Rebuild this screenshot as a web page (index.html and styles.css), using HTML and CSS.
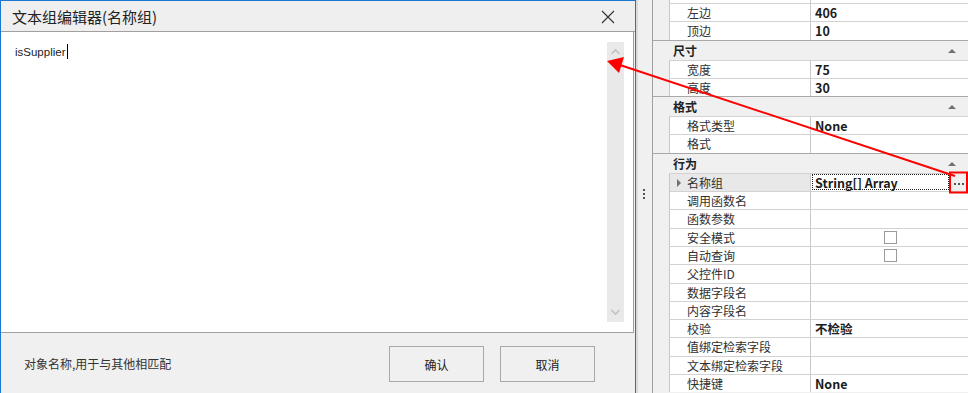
FILE: index.html
```html
<!DOCTYPE html>
<html lang="zh">
<head>
    <meta charset="UTF-8">
    <title>文本组编辑器(名称组)</title>
    <link rel="stylesheet" href="styles.css">
</head>
<body>
    <div class="dialog">
        <div class="titlebar">
            <span class="title">文本组编辑器(名称组)</span>
            <svg class="close" width="14" height="14" viewBox="0 0 14 14"><path d="M1 1L13 13M13 1L1 13" stroke="#333" stroke-width="1.1" fill="none"/></svg>
        </div>
        <div class="editor">
            <div class="text">isSupplier<span class="caret"></span></div>
            <div class="vscroll">
                <svg width="17" height="14" viewBox="0 0 17 14"><path d="M4.5 9L8.5 5L12.5 9" stroke="#c2c2c2" stroke-width="1.6" fill="none"/></svg>
                <svg width="17" height="14" viewBox="0 0 17 14"><path d="M4.5 5L8.5 9L12.5 5" stroke="#c2c2c2" stroke-width="1.6" fill="none"/></svg>
            </div>
        </div>
        <div class="footer">
            <span class="hint">对象名称,用于与其他相匹配</span>
            <button class="btn">确认</button>
            <button class="btn">取消</button>
        </div>
    </div>

    <div class="splitter"><span class="grip"></span></div>

    <div class="pg">
        <div class="row top"><span class="m"></span><span class="k"></span><span class="v"></span></div>
        <div class="row"><span class="m"></span><span class="k">左边</span><span class="v">406</span></div>
        <div class="row"><span class="m"></span><span class="k">顶边</span><span class="v">10</span></div>
        <div class="cat">尺寸<span class="tri"></span></div>
        <div class="row"><span class="m"></span><span class="k">宽度</span><span class="v">75</span></div>
        <div class="row"><span class="m"></span><span class="k">高度</span><span class="v">30</span></div>
        <div class="cat">格式<span class="tri"></span></div>
        <div class="row"><span class="m"></span><span class="k">格式类型</span><span class="v">None</span></div>
        <div class="row"><span class="m"></span><span class="k">格式</span><span class="v"></span></div>
        <div class="cat">行为<span class="tri"></span></div>
        <div class="row sel"><span class="m"></span><span class="k"><i class="expand"></i>名称组</span><span class="v focus">String[] Array<svg class="dots" width="18" height="18" viewBox="0 0 18 18"><path d="M4 10h2v2h-2zM8 10h2v2h-2zM12 10h2v2h-2z" fill="#555"/></svg></span></div>
        <div class="row"><span class="m"></span><span class="k">调用函数名</span><span class="v"></span></div>
        <div class="row"><span class="m"></span><span class="k">函数参数</span><span class="v"></span></div>
        <div class="row"><span class="m"></span><span class="k">安全模式</span><span class="v center"><i class="check"></i></span></div>
        <div class="row"><span class="m"></span><span class="k">自动查询</span><span class="v center"><i class="check"></i></span></div>
        <div class="row"><span class="m"></span><span class="k">父控件ID</span><span class="v"></span></div>
        <div class="row"><span class="m"></span><span class="k">数据字段名</span><span class="v"></span></div>
        <div class="row"><span class="m"></span><span class="k">内容字段名</span><span class="v"></span></div>
        <div class="row"><span class="m"></span><span class="k">校验</span><span class="v">不检验</span></div>
        <div class="row"><span class="m"></span><span class="k">值绑定检索字段</span><span class="v"></span></div>
        <div class="row"><span class="m"></span><span class="k">文本绑定检索字段</span><span class="v"></span></div>
        <div class="row"><span class="m"></span><span class="k">快捷键</span><span class="v">None</span></div>
    </div>

    <!-- annotation drawn over the screenshot -->
    <svg class="annot" width="968" height="393" viewBox="0 0 968 393">
        <line x1="955" y1="176" x2="620" y2="65" stroke="#ff0000" stroke-width="2"/>
        <path d="M607 61L624 57L619 73Z" fill="#ff0000"/>
        <rect x="950" y="172.5" width="17" height="20" fill="none" stroke="#ff0000" stroke-width="2"/>
    </svg>
</body>
</html>
```

FILE: styles.css
```css
body { margin: 0; width: 968px; height: 393px; overflow: hidden; display: flex; background: #f0f0f0; font-family: "Noto Sans CJK SC", "Liberation Sans", sans-serif; font-size: 12px; color: #1e1e1e; position: relative; }

.dialog { width: 636px; height: 393px; box-sizing: border-box; border: 1px solid #1a78d2; border-bottom: none; display: flex; flex-direction: column; background: #f0f0f0; }
.titlebar { height: 30px; display: flex; align-items: center; justify-content: space-between; padding: 0 20px 0 11px; background: #efefef; border-bottom: 1px solid #a0a0a0; }
.title { font-size: 15px; color: #222; }
.close { margin-top: 1px; }

.editor { height: 301px; background: #fff; border-right: 1px solid #a0a0a0; border-bottom: 1px solid #a0a0a0; margin-right: 1px; display: flex; justify-content: space-between; padding: 10px 9px 10px 14px; box-sizing: border-box; }
.text { font-family: "Liberation Sans", sans-serif; font-size: 11.5px; color: #222; line-height: 14px; margin-top: 2px; }
.caret { display: inline-block; width: 1px; height: 15px; background: #000; vertical-align: -3px; margin-left: 1px; }
.vscroll { width: 17px; background: #e9e9e9; display: flex; flex-direction: column; justify-content: space-between; padding: 3px 0; }

.footer { flex: 1; display: flex; align-items: center; padding: 0 0 9px 23px; }
.hint { flex: 1; color: #333; margin-top: 10px; }
.btn { width: 95px; height: 36px; margin: 11px 0 0 16px; background: #f0f0f0; border: 1px solid #a9a9a9; font-family: inherit; font-size: 12px; color: #222; padding: 0; }
.btn:last-child { margin-right: 40px; }

.splitter { width: 16px; border-left: 2px solid #dadada; box-sizing: border-box; display: flex; align-items: center; justify-content: center; padding-bottom: 5px; }
.grip { width: 2px; height: 12px; background: radial-gradient(circle, #555 0.9px, transparent 1.1px) 0 0 / 2px 4px; margin-left: -2px; }

.pg { flex: 1; border-left: 1px solid #a0a0a0; display: flex; flex-direction: column; }
.row { display: flex; height: 18.3px; flex: none; }
.row.top { height: 3px; }
.m { width: 16px; background: #f0f0f0; }
.k { border-left: 1px solid #c8c8c8; border-right: 1px solid #c8c8c8; border-top: 1px solid #d2d2d2; background: #fff; padding-left: 17px; box-sizing: border-box; width: 142px; white-space: nowrap; line-height: 17px; color: #303030; position: relative; }
.v { flex: 1; border-top: 1px solid #d2d2d2; background: #fff; padding-left: 4px; font-weight: bold; font-size: 12.5px; line-height: 17px; white-space: nowrap; color: #1c1c1c; position: relative; }
.row.top .k, .row.top .v { border-top: none; }
.v.center { display: flex; justify-content: center; align-items: center; padding-left: 0; }
.check { display: block; width: 11px; height: 11px; border: 1px solid #9a9a9a; background: #fff; margin-left: 2px; }

.row.sel .k { background: #e8e8e8; }
.expand { position: absolute; left: 7px; top: 5px; border-left: 4px solid #707070; border-top: 4px solid transparent; border-bottom: 4px solid transparent; }
.v.focus { outline: 1px dotted #222; outline-offset: -2px; margin-right: 18px; }
.dots { position: absolute; right: -18px; top: -1px; }

.cat { height: 20px; flex: none; box-sizing: border-box; border-top: 1px solid #a8a8a8; background: #f0f0f0; padding-left: 20px; font-weight: bold; line-height: 19px; position: relative; color: #222; }
.tri { position: absolute; right: 12px; top: 8px; border-bottom: 4px solid #707070; border-left: 4px solid transparent; border-right: 4px solid transparent; }

.annot { position: absolute; left: 0; top: 0; pointer-events: none; }
```
